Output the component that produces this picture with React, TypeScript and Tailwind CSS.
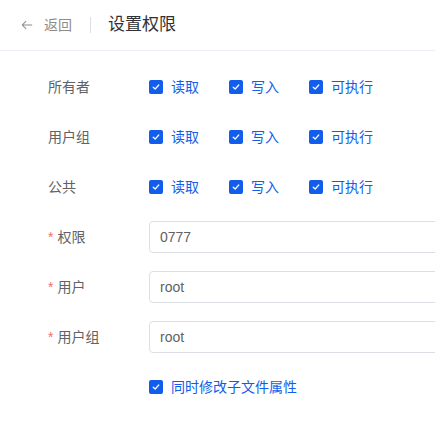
import React from "react";

const font = { fontFamily: '"Liberation Sans", "Noto Sans CJK SC", sans-serif' };

const perms = [
  { label: "所有者", values: ["读取", "写入", "可执行"] },
  { label: "用户组", values: ["读取", "写入", "可执行"] },
  { label: "公共", values: ["读取", "写入", "可执行"] },
];

const fields = [
  { label: "权限", value: "0777" },
  { label: "用户", value: "root" },
  { label: "用户组", value: "root" },
];

function Check({ text }: { text: string }) {
  return (
    <label className="mr-[30px] flex items-center gap-2 text-sm text-[#125deb]">
      <span className="flex h-[14px] w-[14px] shrink-0 items-center justify-center rounded-[2px] bg-[#125deb]">
        <svg width="10" height="10" viewBox="0 0 10 10" fill="none">
          <path d="M2.2 5.2 L4.2 7 L7.8 3" stroke="white" strokeWidth="1.2" strokeLinecap="round" strokeLinejoin="round" />
        </svg>
      </span>
      {text}
    </label>
  );
}

export default function App() {
  return (
    <div className="h-[431px] w-[435px] overflow-hidden bg-white" style={font}>
      {/* Cabecera */}
      <div className="flex h-[51px] items-center border-b border-[#ebeef5] pl-[21px]">
        <button type="button" className="flex items-center gap-[11px] text-sm text-[#8c8c8c]">
          <svg width="12" height="12" viewBox="0 0 14 14" fill="none">
            <path d="M13 7 H1.5 M6 2.5 L1.5 7 L6 11.5" stroke="currentColor" strokeWidth="1.2" />
          </svg>
          返回
        </button>
        <span className="ml-[18px] mr-[17px] h-4 w-px bg-[#dcdfe6]" />
        <h1 className="text-[17px] text-[#303133]">设置权限</h1>
      </div>

      {/* Formulario */}
      <div className="pl-12 pt-5">
        {perms.map((row) => (
          <div key={row.label} className="mb-[18px] flex h-8 items-center">
            <div className="w-[101px] shrink-0 text-sm text-[#606266]">{row.label}</div>
            <div className="flex items-center">
              {row.values.map((v) => (
                <Check key={v} text={v} />
              ))}
            </div>
          </div>
        ))}
        {fields.map((f) => (
          <div key={f.label} className="mb-[18px] flex h-8 items-center">
            <div className="w-[101px] shrink-0 text-sm text-[#606266]">
              <span className="mr-1 text-[#f56c6c]">*</span>
              {f.label}
            </div>
            <div className="flex h-8 w-[320px] shrink-0 items-center rounded border border-[#dcdfe6] px-[10px] text-sm text-[#606266]">
              {f.value}
            </div>
          </div>
        ))}
        <div className="flex h-8 items-center">
          <div className="w-[101px] shrink-0" />
          <Check text="同时修改子文件属性" />
        </div>
      </div>
    </div>
  );
}
